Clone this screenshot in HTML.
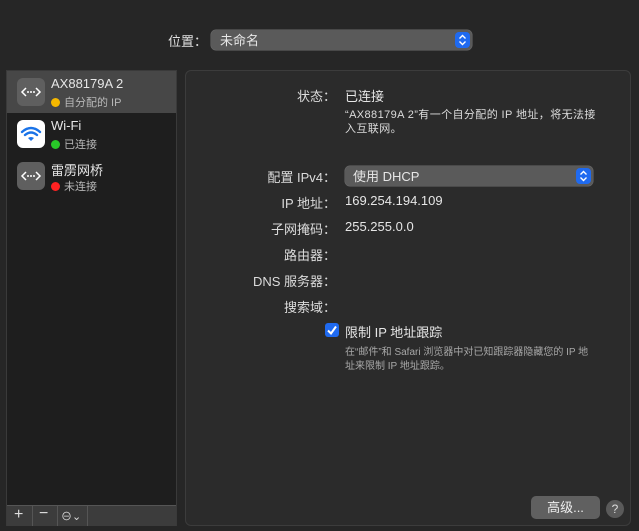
<!DOCTYPE html>
<html><head><meta charset="utf-8"><style>
*{margin:0;padding:0;box-sizing:border-box}
body{width:639px;height:531px;background:#262626;font-family:"Liberation Sans","Noto Sans CJK SC",sans-serif;color:#e6e6e6;position:relative;overflow:hidden;font-size:13px}
.a{position:absolute;white-space:nowrap}
.lbl{position:absolute;right:303px;white-space:nowrap;color:#dcdcdc;font-size:13px}
.val{position:absolute;left:345px;white-space:nowrap;color:#e6e6e6;font-size:13px}
.pop{position:absolute;background:#5a5a5a;border-radius:5px;box-shadow:0 0 0 0.5px #6a6a6a}
.arr{position:absolute;right:2px;top:2px;width:15px;height:16px;background:#1f6af0;border-radius:4px}
.ic{position:absolute;left:10px;width:28px;height:28px;border-radius:6px;background:#5f5f5f}
.dot{display:inline-block;width:9px;height:9px;border-radius:50%;margin-right:4px;vertical-align:-1px}
</style></head><body>
<div class="a" style="left:168px;top:31px;color:#e0e0e0">位置：</div>
<div class="pop" style="left:211px;top:30px;width:261px;height:20px"><span class="a" style="left:9px;top:0px">未命名</span>
<div class="arr"><svg width="15" height="16" viewBox="0 0 15 16"><path d="M4.5 6.5L7.5 3.5L10.5 6.5M4.5 9.5L7.5 12.5L10.5 9.5" stroke="#fff" stroke-width="1.4" fill="none"/></svg></div></div>

<div class="a" style="left:6px;top:70px;width:171px;height:456px;background:#1e1e1e;border:1px solid #3a3a3a">
 <div class="a" style="left:0;top:0;width:169px;height:42px;background:#474747"></div>
 <div class="ic" style="top:7px"><svg width="28" height="28"><path d="M9 10L5 14L9 18M19 10L23 14L19 18" stroke="#fff" stroke-width="1.5" fill="none"/><circle cx="11" cy="14" r="1" fill="#fff"/><circle cx="14" cy="14" r="1" fill="#fff"/><circle cx="17" cy="14" r="1" fill="#fff"/></svg></div>
 <div class="a" style="left:44px;top:5px;font-size:13px">AX88179A 2</div>
 <div class="a" style="left:44px;top:23px;font-size:11px;color:#b8b8b8"><span class="dot" style="background:#f5b800"></span>自分配的 IP</div>
 <div class="ic" style="top:49px;background:#fff"><svg width="28" height="28"><path d="M5 12Q14 4 23 12M8 15Q14 10 20 15" stroke="#1a73e8" stroke-width="2.4" fill="none" stroke-linecap="round"/><path d="M11 18Q14 16 17 18L14 21Z" fill="#1a73e8"/></svg></div>
 <div class="a" style="left:44px;top:47px">Wi-Fi</div>
 <div class="a" style="left:44px;top:65px;font-size:11px;color:#b8b8b8"><span class="dot" style="background:#28c828"></span>已连接</div>
 <div class="ic" style="top:91px"><svg width="28" height="28"><path d="M9 10L5 14L9 18M19 10L23 14L19 18" stroke="#fff" stroke-width="1.5" fill="none"/><circle cx="11" cy="14" r="1" fill="#fff"/><circle cx="14" cy="14" r="1" fill="#fff"/><circle cx="17" cy="14" r="1" fill="#fff"/></svg></div>
 <div class="a" style="left:44px;top:89px">雷雳网桥</div>
 <div class="a" style="left:44px;top:107px;font-size:11px;color:#b8b8b8"><span class="dot" style="background:#f22"></span>未连接</div>
 <div class="a" style="left:0;top:434px;width:169px;height:21px;background:#3c3c3c;border-top:1px solid #555"></div>
 <div class="a" style="left:25px;top:434px;width:1px;height:21px;background:#555"></div>
 <div class="a" style="left:50px;top:434px;width:1px;height:21px;background:#555"></div>
 <div class="a" style="left:80px;top:434px;width:1px;height:21px;background:#555"></div>
 <div class="a" style="left:7px;top:435px;font-size:16px;color:#ddd">+</div>
 <div class="a" style="left:32px;top:434px;font-size:16px;color:#ddd">−</div>
 <div class="a" style="left:54px;top:437px;font-size:11px;color:#ddd">⊖⌄</div>
</div>

<div class="a" style="left:185px;top:70px;width:446px;height:456px;background:#2b2b2b;border:1px solid #3c3c3c;border-radius:6px"></div>
<div class="lbl" style="top:86px">状态：</div><div class="val" style="top:86px">已连接</div>
<div class="a" style="left:345px;top:108px;font-size:11px;line-height:14px;color:#dcdcdc;letter-spacing:0.4px">“AX88179A 2”有一个自分配的 IP 地址，将无法接<br>入互联网。</div>
<div class="lbl" style="top:167px">配置 IPv4：</div>
<div class="pop" style="left:345px;top:166px;width:248px;height:20px"><span class="a" style="left:8px;top:0px">使用 DHCP</span>
<div class="arr"><svg width="15" height="16" viewBox="0 0 15 16"><path d="M4.5 6.5L7.5 3.5L10.5 6.5M4.5 9.5L7.5 12.5L10.5 9.5" stroke="#fff" stroke-width="1.4" fill="none"/></svg></div></div>
<div class="lbl" style="top:193px">IP 地址：</div><div class="val" style="top:193px">169.254.194.109</div>
<div class="lbl" style="top:219px">子网掩码：</div><div class="val" style="top:219px">255.255.0.0</div>
<div class="lbl" style="top:245px">路由器：</div>
<div class="lbl" style="top:271px">DNS 服务器：</div>
<div class="lbl" style="top:297px">搜索域：</div>
<div class="a" style="left:325px;top:323px;width:14px;height:14px;background:#1f6af0;border-radius:3px"><svg width="14" height="14"><path d="M3 7.5L6 10.5L11 3.5" stroke="#fff" stroke-width="2" fill="none"/></svg></div>
<div class="val" style="top:322px">限制 IP 地址跟踪</div>
<div class="a" style="left:345px;top:346px;font-size:10px;line-height:14px;color:#a8a8a8">在“邮件”和 Safari 浏览器中对已知跟踪器隐藏您的 IP 地<br>址来限制 IP 地址跟踪。</div>
<div class="a" style="left:531px;top:496px;width:69px;height:23px;background:#606060;border-radius:5px;text-align:center;line-height:23px;color:#eee">高级...</div>
<div class="a" style="left:606px;top:500px;width:18px;height:18px;border-radius:50%;background:#5a5a5a;text-align:center;line-height:18px;font-size:12px;color:#ddd">?</div>
</body></html>
